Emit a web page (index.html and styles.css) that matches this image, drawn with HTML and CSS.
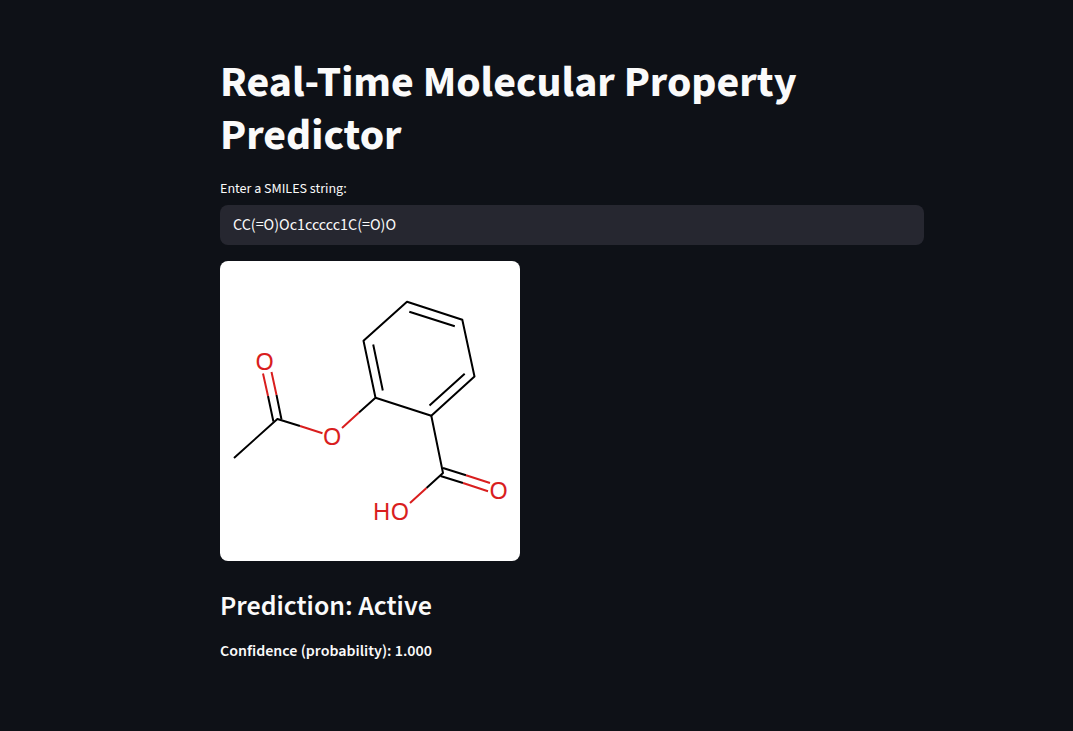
FILE: index.html
```
<!DOCTYPE html>
<html lang="en">
<head>
<meta charset="utf-8">
<meta name="viewport" content="width=device-width, initial-scale=1">
<title>Real-Time Molecular Property Predictor</title>
<link rel="stylesheet" href="styles.css">
</head>
<body>
<main class="page">
  <div class="content">
    <h1 class="title">Real-Time Molecular Property Predictor</h1>
    <form class="field">
      <label class="field-label" for="smiles">Enter a SMILES string:</label>
      <input class="field-input" id="smiles" type="text" value="CC(=O)Oc1ccccc1C(=O)O" spellcheck="false" autocomplete="off">
    </form>
    <svg class="molecule" viewBox="0 0 300 300" role="img" aria-label="Structure of the molecule">
      <g class="bond">
        <path d="M14 197L57.400 158L80 165"/>
        <path d="M53.400 160.500L48 135M61.500 158.500L56.500 134"/>
        <path d="M139 151.500L155.500 136.700L143.500 79.800L187 40.700L242.300 58.700L254.500 115.500L211.300 154.800L155.500 136.700"/>
        <path d="M162.800 129.500L153.200 83.500M189.300 50.700L234.800 65.200M244.700 112.700L209.500 144.500"/>
        <path d="M211.300 154.800L223 212L206.500 227"/>
        <path d="M223 207L246 214.300M220.500 215L243 222"/>
      </g>
      <g class="bond bond-oxygen">
        <path d="M80 165L102.500 172.200M122 167L139 151.500M48 135L43 112.500M56.500 134L51.500 111"/>
        <path d="M206.500 227L190 242M246 214.300L270 222M243 222L268 230.300"/>
      </g>
      <g class="atom">
        <text x="44.500" y="109">O</text>
        <text x="112" y="184">O</text>
        <text x="278.500" y="238">O</text>
        <text x="171" y="259">HO</text>
      </g>
    </svg>
    <h3 class="prediction">Prediction: Active</h3>
    <p class="confidence"><strong>Confidence (probability): 1.000</strong></p>
  </div>
</main>
</body>
</html>
```
FILE: styles.css
```
* {
  box-sizing: border-box;
}

body {
  margin: 0;
  min-height: 100vh;
  background: #0e1117;
  color: #fafafa;
  font-family: "Source Sans 3", "Source Sans Pro", "Noto Sans CJK SC", sans-serif;
  font-size: 16px;
}

.page {
  padding: 56px 0 60px 71px;
}

.content {
  display: flex;
  flex-direction: column;
  width: 100%;
  max-width: 704px;
  margin: 0 auto;
}

.title {
  margin: 0 0 17px;
  font-size: 44px;
  font-weight: 700;
  line-height: 53px;
}

.field {
  display: flex;
  flex-direction: column;
  gap: 5px;
  margin: 0 0 16px;
}

.field-label {
  font-size: 14px;
  line-height: 21px;
}

.field-input {
  width: 100%;
  height: 40px;
  padding: 0 13px;
  border: 0;
  border-radius: 8px;
  background: #262730;
  color: inherit;
  font: inherit;
}

.molecule {
  width: 300px;
  max-width: 100%;
  border-radius: 8px;
  background: #fff;
}

.bond {
  fill: none;
  stroke: #000;
  stroke-width: 2;
  stroke-linejoin: round;
}

.bond-oxygen {
  stroke: #d91e1e;
}

.atom {
  fill: #d91e1e;
  font-family: "Noto Sans", "DejaVu Sans", sans-serif;
  font-size: 24px;
  text-anchor: middle;
}

.prediction {
  margin: 28px 0 16px;
  font-size: 28px;
  font-weight: 600;
  line-height: 34px;
}

.confidence {
  margin: 0;
  line-height: 24px;
}

.confidence strong {
  font-weight: 600;
}
```
